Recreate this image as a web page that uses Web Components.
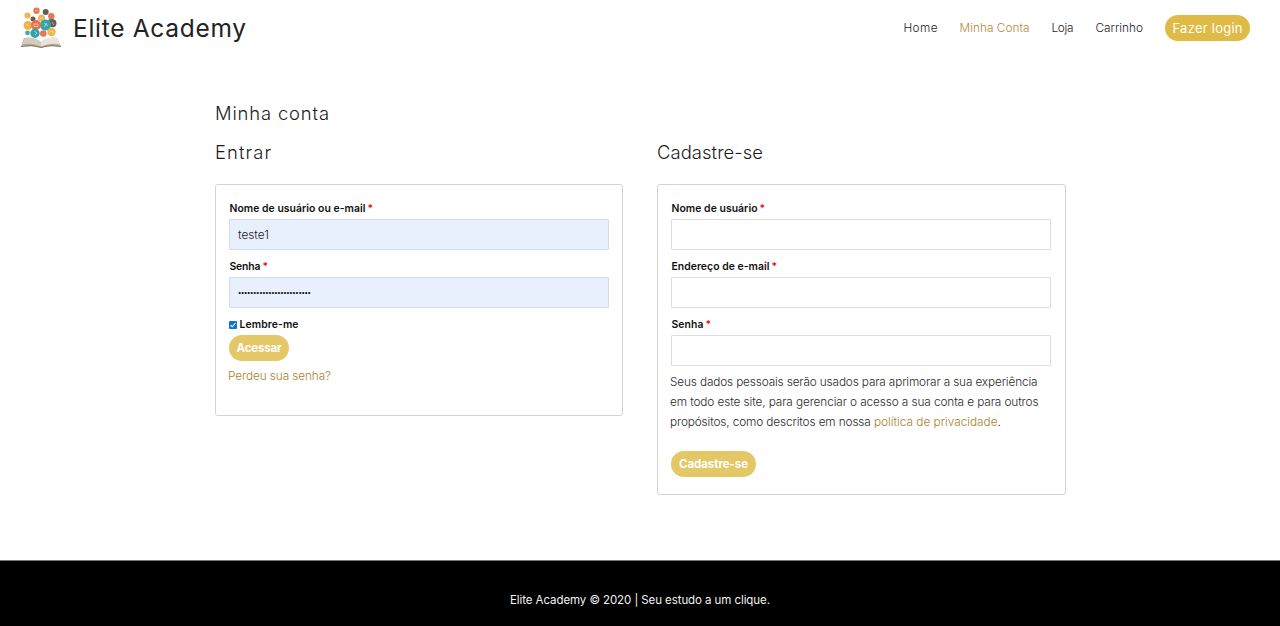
<!DOCTYPE html>
<html lang="pt-BR">
<head>
<meta charset="utf-8">
<title>Minha conta – Elite Academy</title>
<style>
html,body{margin:0;height:100%}
body{background:#fff;font-family:Inter,"Open Sans",sans-serif;color:#1c1c1c;overflow:hidden}
</style>
</head>
<body>
<academy-page></academy-page>
<script>
const define = (name, html, extra) => customElements.define(name, class extends HTMLElement {
  constructor(){
    super();
    const t = document.createElement('template');
    t.innerHTML = html;
    this.attachShadow({mode:'open'}).append(t.content.cloneNode(true));
  }
  connectedCallback(){ if (extra) extra(this); }
});

/* Text set to a given measure: tracking is spread over the glyphs */
define('ui-text', `<style>:host{display:inline-block;white-space:pre;flex:none}</style><slot></slot>`, el => {
  const w = parseFloat(el.getAttribute('measure'));
  el.style.letterSpacing = '0px';
  const n = el.textContent.length;
  el.style.letterSpacing = ((w - el.getBoundingClientRect().width) / (n - 1)).toFixed(4) + 'px';
  el.style.width = w + 'px';
});

define('academy-logo', `<style>:host{display:block;width:42px;height:42px}svg{display:block}</style>
<svg width="42" height="42" viewBox="0 0 42 42">
<path d="M4 31 L1 39.500 Q12 38.500 21 40.500 Q30 38.500 41 39.500 L37 31 Q28 30 21 35 Q13 30 4 31Z" fill="#b3aa9b"/>
<path d="M5 31 Q14 29 21 35 L21 39.500 Q12 35.500 2 37.500Z" fill="#d3ccbe"/>
<path d="M37 31 Q28 29 21 35 L21 39.500 Q30 35.500 40 37.500Z" fill="#e9e3d8"/>
<path d="M1 39.500 Q12 37 21 40.500 Q30 37 41 39.500" fill="none" stroke="#82796d"/>
<g>
<circle cx="16.500" cy="3.800" r="3.200" fill="#ee7650"/><circle cx="25.700" cy="5" r="3" fill="#675d57"/>
<circle cx="7.500" cy="8.500" r="3.100" fill="#f0b74e"/><circle cx="31.300" cy="9.200" r="3.200" fill="#ec7552"/>
<circle cx="21.500" cy="11" r="3.500" fill="#e9b75a"/><circle cx="13" cy="12" r="2.500" fill="#675d57"/>
<circle cx="31" cy="14.500" r="3" fill="#3aa8aa"/><circle cx="32.500" cy="16.300" r="4" fill="#695d54"/>
<circle cx="8" cy="18.300" r="4.400" fill="#efb045"/><circle cx="25.500" cy="18" r="5.600" fill="#35a5ab"/>
<circle cx="16" cy="18" r="5" fill="#eb7050"/><circle cx="7.500" cy="25.800" r="2.400" fill="#45a8aa"/>
<circle cx="15" cy="26.300" r="4.700" fill="#35a2a7"/><circle cx="23.300" cy="26.500" r="3.300" fill="#eb7554"/>
<circle cx="31.500" cy="25" r="4.200" fill="#efb550"/></g>
<g fill="none" stroke="#fff" stroke-width=".9" opacity=".55"><path d="M14 17h4v2.500h-4zM24 16l4 3M24 20l3-4M14 24l3 2-2 2M6 17l3 2M30 24.500h3v2M32 15l2 3M20 11h3M15.500 3.500h2"/></g>
</svg>`);

define('nav-link', `<style>:host{display:block;font-size:11.8px;line-height:20px;font-weight:350}:host([active]){color:#b08a3c}</style><slot></slot>`);

define('pill-button', `<style>
:host{display:block}
button{display:flex;align-items:center;justify-content:center;width:var(--w);height:26px;border:0;border-radius:13px;padding:0;background:var(--bg,#e4c767);color:#fff;font:var(--font,700 11.5px/20px Inter,sans-serif)}
</style><button type="button"><slot></slot></button>`);

define('site-header', `<style>
:host{display:flex;align-items:center;height:56px;padding:0 30px 0 20px;box-sizing:border-box}
.brand{font-size:24.5px;line-height:30px;margin:-1px 0 0 11px;color:#222}
nav{display:flex;align-items:center;margin-left:auto}
nav-link{margin-right:22px}
pill-button{--w:85px;--bg:#dfba45;--font:400 13px/20px Inter,sans-serif}
</style>
<academy-logo></academy-logo>
<div class="brand"><ui-text measure="173">Elite Academy</ui-text></div>
<nav>
<nav-link><ui-text measure="34">Home</ui-text></nav-link>
<nav-link active><ui-text measure="70">Minha Conta</ui-text></nav-link>
<nav-link><ui-text measure="22">Loja</ui-text></nav-link>
<nav-link><ui-text measure="47.5">Carrinho</ui-text></nav-link>
<pill-button><ui-text measure="70">Fazer login</ui-text></pill-button>
</nav>`);

define('page-heading', `<style>:host{display:block;font-size:18.4px;line-height:26px;font-weight:300}h2{all:unset;display:block}</style><h2><slot></slot></h2>`);

define('form-field', `<style>
:host{display:block;margin-bottom:7px}
label{display:flex;align-items:center;gap:2px;height:20px;line-height:18px;padding:0 0 1px .5px;box-sizing:border-box;font-size:10.4px;font-weight:600;color:#111}
i{font-style:normal;color:#e01010}
input{display:block;box-sizing:border-box;width:380px;height:31px;margin:0;border:1px solid #ddd;border-radius:1px;padding:0 8px;background:#fff;font:350 11.8px Inter,sans-serif;color:#222;outline:0}
:host([filled]) input{background:#e8f0fe;border-color:#d4dbe3}
input[type=password]{font-size:6.6px;font-weight:600;color:#111;letter-spacing:-.3px}
</style><label><slot></slot><i>*</i></label><input>`, el => {
  const i = el.shadowRoot.querySelector('input');
  i.type = el.getAttribute('type') || 'text';
  i.value = el.getAttribute('value') || '';
});

define('check-row', `<style>
:host{display:flex;align-items:center;gap:2.5px;height:19px;padding-bottom:1px;font-size:10.4px;font-weight:600;color:#111}
svg{display:block}
</style><svg width="8" height="8" viewBox="0 0 8 8"><rect width="8" height="8" rx="1" fill="#0b72e0"/><path d="M1.6 4.2 3.2 5.8 6.5 2" fill="none" stroke="#fff" stroke-width="1.1"/></svg><slot></slot>`);

define('form-card', `<style>:host{display:block;box-sizing:border-box;border:1px solid #d3d3d3;border-radius:3px;padding:14px 13px 0}</style><slot></slot>`);

define('login-form', `<style>
:host{display:block;width:408px}
form-card{height:232px;margin-top:19px}
pill-button{--w:60px}
.lost{font-size:11.8px;line-height:20px;font-weight:350;color:#a9822f;margin:5px 0 0 -1px}
</style>
<page-heading><ui-text measure="56">Entrar</ui-text></page-heading>
<form-card>
<form-field filled value="teste1"><ui-text measure="136">Nome de usuário ou e-mail</ui-text></form-field>
<form-field filled type="password" value="abcdefghijklmnopqrstuvwx"><ui-text measure="31">Senha</ui-text></form-field>
<check-row><ui-text measure="59">Lembre-me</ui-text></check-row>
<pill-button><ui-text measure="45">Acessar</ui-text></pill-button>
<div class="lost"><ui-text measure="103">Perdeu sua senha?</ui-text></div>
</form-card>`);

define('signup-form', `<style>
:host{display:block;width:409px}
form-card{height:311px;margin-top:19px}
pill-button{--w:85px}
.note{font-size:11.8px;line-height:20px;font-weight:350;color:#2b2b2b;margin:-1px 0 19px -1px}
.note div{display:flex;height:20px}
.gold{color:#a9822f}
</style>
<page-heading><ui-text measure="106">Cadastre-se</ui-text></page-heading>
<form-card>
<form-field><ui-text measure="86">Nome de usuário</ui-text></form-field>
<form-field><ui-text measure="98">Endereço de e-mail</ui-text></form-field>
<form-field type="password"><ui-text measure="32">Senha</ui-text></form-field>
<div class="note">
<div><ui-text measure="367.5">Seus dados pessoais serão usados para aprimorar a sua experiência</ui-text></div>
<div><ui-text measure="368.5">em todo este site, para gerenciar o acesso a sua conta e para outros</ui-text></div>
<div><ui-text measure="204">propósitos, como descritos em nossa </ui-text><ui-text class="gold" measure="123.5">política de privacidade</ui-text><span>.</span></div>
</div>
<pill-button><ui-text measure="69">Cadastre-se</ui-text></pill-button>
</form-card>`);

define('site-footer', `<style>
:host{display:flex;justify-content:center;box-sizing:border-box;height:66px;border-top:1px solid #777;background:#000;color:#f2f2f2;padding-top:29px;font-size:11.5px;line-height:20px}
</style><ui-text measure="260">Elite Academy © 2020 | Seu estudo a um clique.</ui-text>`);

define('academy-page', `<style>
:host{display:flex;flex-direction:column;height:626px}
main{flex:1;padding:44px 214px 0 215px}
.forms{display:flex;justify-content:space-between;margin-top:13px}
</style>
<site-header></site-header>
<main>
<page-heading><ui-text measure="114">Minha conta</ui-text></page-heading>
<div class="forms"><login-form></login-form><signup-form></signup-form></div>
</main>
<site-footer></site-footer>`);
</script>
</body>
</html>
